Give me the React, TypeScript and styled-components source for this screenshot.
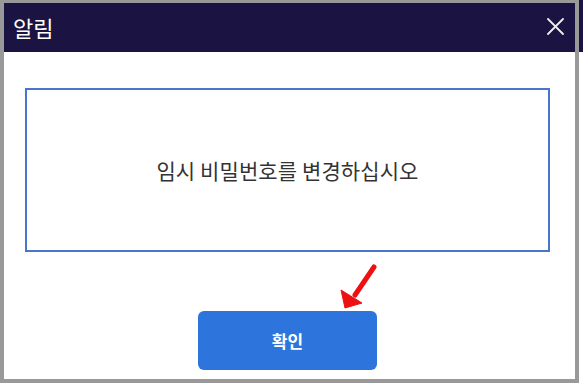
import React from "react";
import styled, { createGlobalStyle } from "styled-components";

const GlobalStyle = createGlobalStyle`
  html, body {
    margin: 0;
    padding: 0;
    background: #ffffff;
  }
  body {
    font-family: "Noto Sans CJK KR", "Noto Sans", sans-serif;
  }
`;

const Page = styled.div`
  display: flex;
  width: 583px;
  height: 383px;
`;

const Frame = styled.div`
  box-sizing: border-box;
  width: 579px;
  height: 383px;
  border-style: solid;
  border-color: #999999;
  border-width: 3px 4px 4px 4px;
  display: flex;
  flex-direction: column;
  background: #ffffff;
`;

const Edge = styled.div`
  width: 4px;
  height: 383px;
  background: linear-gradient(to bottom, #1b1442 0, #1b1442 52px, #ffffff 52px);
`;

const Header = styled.div`
  height: 49px;
  background: #1b1442;
  display: flex;
  align-items: center;
  justify-content: space-between;
  padding: 0 8px 0 9px;
  flex-shrink: 0;
`;

const Title = styled.span`
  color: #ffffff;
  font-size: 22px;
  line-height: 1;
  margin-top: -2px;
`;

const CloseButton = styled.button`
  width: 24px;
  height: 24px;
  padding: 0;
  border: none;
  background: transparent;
  display: flex;
  align-items: center;
  justify-content: center;
  margin-top: -2px;
`;

const Body = styled.div`
  padding: 36px 25px 0 21px;
`;

const MessageBox = styled.div`
  box-sizing: border-box;
  height: 164px;
  border: 2px solid #4a76c9;
  display: flex;
  align-items: center;
  justify-content: center;
`;

const Message = styled.p`
  margin: 0;
  font-size: 21px;
  color: #333333;
  letter-spacing: 0.1px;
`;

const Footer = styled.div`
  position: relative;
  display: flex;
  justify-content: center;
  padding: 59px 4px 0 0;
`;

const ConfirmButton = styled.button`
  width: 179px;
  height: 59px;
  border: none;
  border-radius: 6px;
  background: #2d74dc;
  color: #ffffff;
  font-family: "Noto Sans CJK KR", "Noto Sans", sans-serif;
  font-size: 17px;
  font-weight: 700;
  padding: 0;
`;

const Arrow = styled.svg`
  position: absolute;
  left: 330px;
  top: 10px;
  overflow: visible;
`;

export default function App() {
  return (
    <>
      <GlobalStyle />
      <Page>
        <Frame>
          <Header>
            <Title>알림</Title>
            <CloseButton aria-label="닫기">
              <svg width="17" height="17" viewBox="0 0 17 17">
                <path d="M1 1 L16 16 M16 1 L1 16" stroke="#ececf2" strokeWidth="1.8" strokeLinecap="round" />
              </svg>
            </CloseButton>
          </Header>
          <Body>
            <MessageBox>
              <Message>임시 비밀번호를 변경하십시오</Message>
            </MessageBox>
          </Body>
          <Footer>
            <ConfirmButton>확인</ConfirmButton>
            <Arrow width="40" height="48" viewBox="0 0 40 48">
              <path d="M40 5 L21 33" stroke="#ee1111" strokeWidth="5" strokeLinecap="round" />
              <path d="M11 46 L7 28 L28 41 Z" fill="#ee1111" stroke="#ee1111" strokeWidth="1" strokeLinejoin="round" />
            </Arrow>
          </Footer>
        </Frame>
        <Edge />
      </Page>
    </>
  );
}
